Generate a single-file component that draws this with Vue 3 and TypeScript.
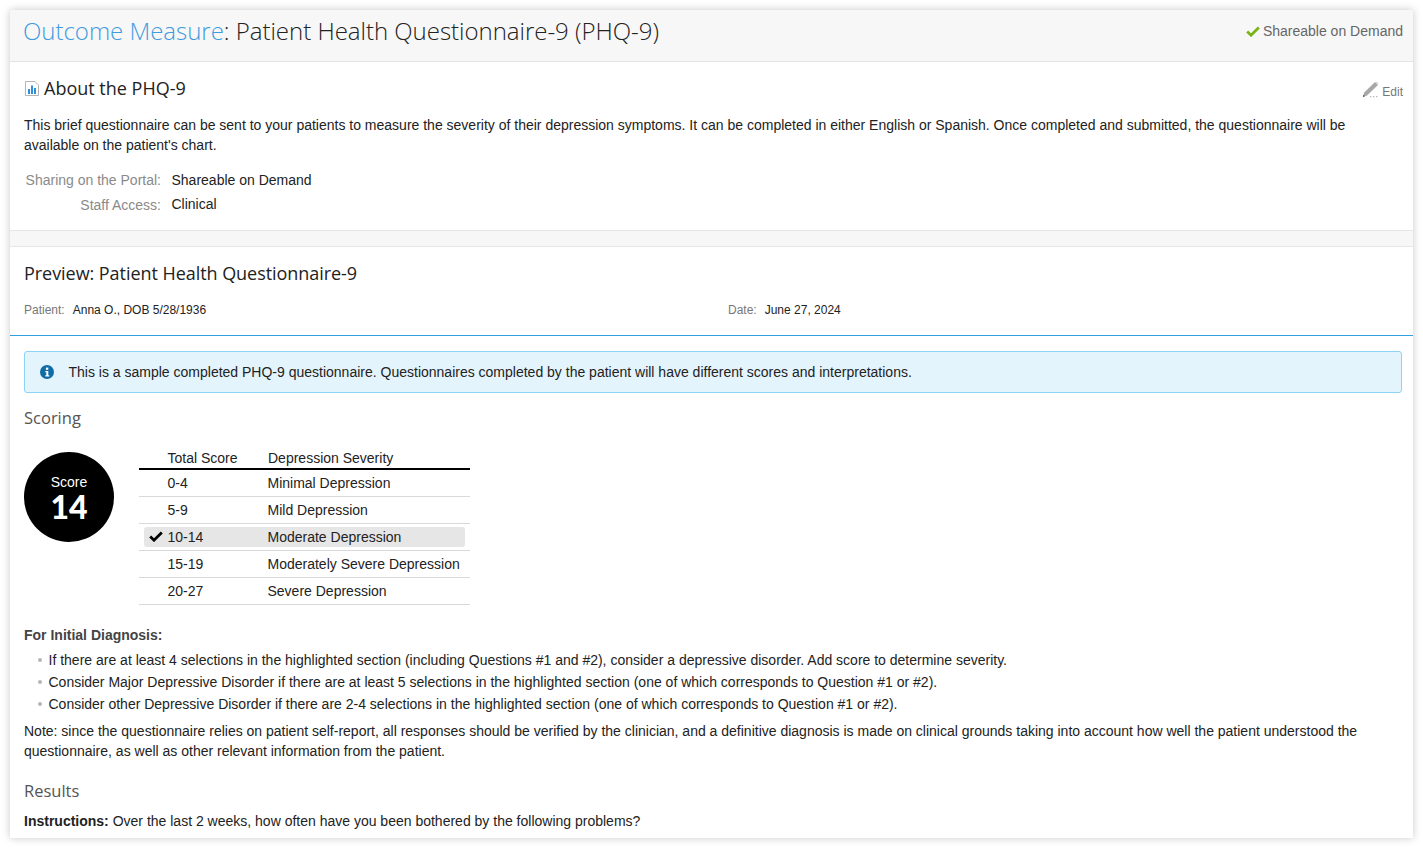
<template>
  <div class="page">
    <div class="card">
      <header class="top">
        <h1 class="title"><span class="link">Outcome Measure</span>: Patient Health Questionnaire-9 (PHQ-9)</h1>
        <div class="share">
          <svg class="share-check" viewBox="0 0 14 11" width="14" height="11">
            <path d="M1.2 5.6 L5 9.200 L12.8 1.600" fill="none" stroke="#7ab317" stroke-width="2.800" />
          </svg>
          Shareable on Demand
        </div>
      </header>

      <section class="about">
        <div class="about-head">
          <h2 class="h2">
            <svg class="doc" viewBox="0 0 14 15" width="14" height="15">
              <path d="M.5 .5H10L13.500 4V14.500H.5Z" fill="#fff" stroke="#b5b5b5" />
              <rect x="3" y="8" width="2" height="5" fill="#2f8fd8" />
              <rect x="6" y="4.500" width="2" height="8.500" fill="#2f8fd8" />
              <rect x="9" y="7" width="2" height="6" fill="#2f8fd8" />
            </svg>
            About the PHQ-9
          </h2>
          <div class="edit">
            <svg viewBox="0 0 17 17" width="17" height="17">
              <path d="M13 1 16 4 5 14.500 .8 16 2.200 11.500Z" fill="#a8a8a8" />
              <path d="M13 1 14.500 .5 16.500 2.500 16 4Z" fill="#d8d8d8" />
              <path d="M.8 16 1.500 13.700 3 15.300Z" fill="#555" />
              <path d="M8 15h1.300v1.300H8zM11 15h1.300v1.300H11zM14 15h1.300v1.300H14z" fill="#b5b5b5" />
            </svg>
            <span>Edit</span>
          </div>
        </div>
        <p class="desc">
          This brief questionnaire can be sent to your patients to measure the severity of their depression symptoms. It can be completed in either English or Spanish. Once completed and submitted, the questionnaire will be available on the patient's chart.
        </p>
        <div class="meta">
          <template v-for="m in meta" :key="m.label">
            <span class="meta-label">{{ m.label }}</span>
            <span>{{ m.value }}</span>
          </template>
        </div>
      </section>

      <div class="band"></div>

      <section class="preview">
        <h2 class="h2 preview-title">Preview: Patient Health Questionnaire-9</h2>
        <div class="info-row">
          <div class="info-cell"><span class="info-label">Patient:</span>Anna O., DOB 5/28/1936</div>
          <div class="info-cell"><span class="info-label">Date:</span>June 27, 2024</div>
        </div>
      </section>

      <section class="body">
        <div class="alert">
          <svg viewBox="0 0 14 14" width="14" height="14">
            <circle cx="7" cy="7" r="7" fill="#0f6ca6" />
            <rect x="5.900" y="2.600" width="2.400" height="2.200" fill="#fff" />
            <path d="M5.300 6h3v4.200h1v1.200H5.300v-1.200h1V7.200H5.300Z" fill="#fff" />
          </svg>
          <span>This is a sample completed PHQ-9 questionnaire. Questionnaires completed by the patient will have different scores and interpretations.</span>
        </div>

        <h3 class="h3">Scoring</h3>

        <div class="scoring">
          <div class="circle">
            <span class="circle-label">Score</span>
            <span class="circle-num">14</span>
          </div>
          <table class="table">
            <thead>
              <tr>
                <th class="c1">Total Score</th>
                <th>Depression Severity</th>
              </tr>
            </thead>
            <tbody>
              <tr v-for="r in rows" :key="r.range">
                <td colspan="2">
                  <div class="row" :class="{ active: r.active }">
                    <svg v-if="r.active" class="tick" viewBox="0 0 14 11" width="14" height="11">
                      <path d="M1.200 5.600 L5 9.200 L12.800 1.600" fill="none" stroke="#000" stroke-width="2.800" />
                    </svg>
                    <span class="range">{{ r.range }}</span>
                    <span>{{ r.label }}</span>
                  </div>
                </td>
              </tr>
            </tbody>
          </table>
        </div>

        <div class="diag-title">For Initial Diagnosis:</div>
        <ul class="list">
          <li v-for="b in bullets" :key="b">{{ b }}</li>
        </ul>
        <p class="note">
          Note: since the questionnaire relies on patient self-report, all responses should be verified by the clinician, and a definitive diagnosis is made on clinical grounds taking into account how well the patient understood the questionnaire, as well as other relevant information from the patient.
        </p>

        <h3 class="h3 results">Results</h3>
        <p class="instr"><b>Instructions:</b> Over the last 2 weeks, how often have you been bothered by the following problems?</p>
      </section>
    </div>
  </div>
</template>

<script setup lang="ts">
const meta = [
  { label: "Sharing on the Portal:", value: "Shareable on Demand" },
  { label: "Staff Access:", value: "Clinical" },
];

const rows = [
  { range: "0-4", label: "Minimal Depression", active: false },
  { range: "5-9", label: "Mild Depression", active: false },
  { range: "10-14", label: "Moderate Depression", active: true },
  { range: "15-19", label: "Moderately Severe Depression", active: false },
  { range: "20-27", label: "Severe Depression", active: false },
];

const bullets = [
  "If there are at least 4 selections in the highlighted section (including Questions #1 and #2), consider a depressive disorder. Add score to determine severity.",
  "Consider Major Depressive Disorder if there are at least 5 selections in the highlighted section (one of which corresponds to Question #1 or #2).",
  "Consider other Depressive Disorder if there are 2-4 selections in the highlighted section (one of which corresponds to Question #1 or #2).",
];
</script>

<style>
html,
body {
  background: #fff;
  overflow: hidden;
}
</style>

<style scoped>
.page {
  padding: 10px;
  height: 848px;
  box-sizing: border-box;
  font-family: "Liberation Sans", Arial, sans-serif;
  font-size: 14px;
  line-height: 20px;
  color: #222;
}
.card {
  height: 828px;
  overflow: hidden;
  background: #fff;
  box-shadow: 0 0 8px rgba(0, 0, 0, 0.22);
}
.top {
  height: 52px;
  box-sizing: border-box;
  padding: 0 10px 0 13px;
  display: flex;
  justify-content: space-between;
  background: #f7f7f7;
  border-bottom: 1px solid #e3e3e3;
}
.title {
  margin: 0;
  font-family: "Open Sans", sans-serif;
  font-weight: 300;
  font-size: 24px;
  line-height: 41px;
  letter-spacing: -0.02px;
  color: #222;
}
.link {
  color: #3f9be0;
}
.share {
  color: #666;
  line-height: 42px;
  display: flex;
  align-items: center;
  height: 42px;
  gap: 2.5px;
}
.share-check {
  margin-top: 1px;
}
.about {
  padding: 14px 10px 0 14px;
  height: 169px;
  box-sizing: border-box;
  border-bottom: 1px solid #e6e6e6;
}
.about-head {
  display: flex;
  justify-content: space-between;
  align-items: center;
  height: 24px;
}
.h2 {
  margin: 0;
  font-family: "Open Sans", sans-serif;
  font-weight: 400;
  font-size: 18px;
  line-height: 24px;
  color: #222;
  display: flex;
  align-items: center;
  gap: 5px;
}
.preview-title {
  letter-spacing: -0.05px;
}
.doc {
  flex: none;
  margin-left: 1px;
}
.edit {
  display: flex;
  align-items: flex-end;
  gap: 3px;
  font-size: 12px;
  color: #777;
  margin-top: 3px;
}
.edit span {
  line-height: 14px;
  margin-bottom: -1px;
}
.desc {
  margin: 15px 0 0;
}
.meta {
  display: grid;
  grid-template-columns: 137px auto;
  justify-content: start;
  column-gap: 10.5px;
  row-gap: 4px;
  margin-top: 15px;
}
.meta-label {
  text-align: right;
  color: #8a8a8a;
}
.meta-label:nth-child(3) {
  margin-top: 1px;
}
.band {
  height: 15px;
  background: #f7f7f7;
  border-bottom: 1px solid #e6e6e6;
}
.preview {
  height: 89px;
  box-sizing: border-box;
  padding: 14px 14px 0;
  border-bottom: 1px solid #2f9fe0;
}
.info-row {
  display: flex;
  margin-top: 15px;
  font-size: 12px;
}
.info-cell {
  flex: none;
  width: 704px;
}
.info-label {
  color: #777;
  margin-right: 8px;
}
.body {
  padding: 15px 11px 0 14px;
}
.alert {
  height: 42px;
  box-sizing: border-box;
  display: flex;
  align-items: center;
  gap: 14.5px;
  padding: 0 15px;
  background: #e4f4fc;
  border: 1px solid #8ed2f5;
  border-radius: 3px;
}
.h3 {
  margin: 14px 0 0;
  font-family: "Open Sans", sans-serif;
  font-weight: 400;
  font-size: 16.5px;
  line-height: 22px;
  color: #555;
}
.scoring {
  display: flex;
  gap: 25px;
  margin-top: 19px;
}
.circle {
  width: 90px;
  height: 90px;
  margin-top: 4px;
  border-radius: 50%;
  background: #000;
  color: #fff;
  display: flex;
  flex-direction: column;
  align-items: center;
  padding-top: 20px;
  box-sizing: border-box;
}
.circle-label {
  line-height: 20px;
}
.circle-num {
  font-family: Lato, "Liberation Sans", sans-serif;
  font-size: 32px;
  font-weight: 900;
  line-height: 29px;
}
.table {
  border-collapse: separate;
  border-spacing: 0;
  width: 331px;
}
.table th {
  font-weight: 400;
  text-align: left;
  height: 20px;
  line-height: 18px;
  padding: 0;
  border-bottom: 2px solid #000;
}
.table th.c1 {
  width: 129px;
  padding-left: 28.5px;
  box-sizing: border-box;
}
.table td {
  padding: 3px 5px 3px;
  height: 27px;
  box-sizing: border-box;
  border-bottom: 1px solid #d9d9d9;
}
.row {
  display: flex;
  align-items: center;
  height: 20px;
  padding-left: 23.5px;
  border-radius: 3px;
  position: relative;
}
.row.active {
  background: #e6e6e6;
}
.tick {
  position: absolute;
  left: 5px;
  top: 4px;
}
.range {
  width: 100px;
}
.diag-title {
  margin-top: 20px;
  font-weight: 700;
  color: #444;
}
.list {
  list-style: none;
  margin: 4px 0 0;
  padding: 0 0 0 24.5px;
}
.list li {
  position: relative;
  line-height: 22px;
}
.list li::before {
  content: "";
  position: absolute;
  left: -11px;
  top: 9px;
  width: 4px;
  height: 4px;
  border-radius: 50%;
  background: #b5b5b5;
}
.note {
  margin: 6px 0 0;
}
.results {
  margin-top: 19px;
}
.instr {
  margin: 9px 0 0;
}
</style>
